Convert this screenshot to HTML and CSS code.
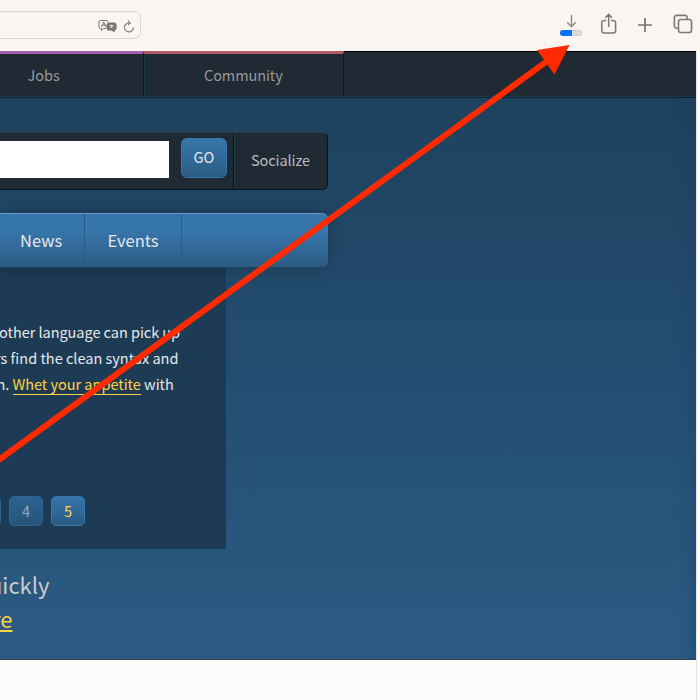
FILE: index.html
```html
<!DOCTYPE html>
<html lang="en">
<head>
<meta charset="utf-8">
<title>Python.org download</title>
<link rel="stylesheet" href="styles.css">
</head>
<body>
<header class="toolbar">
  <div class="address">
    <svg class="translate" width="20" height="15" viewBox="0 0 20 15" fill="none" stroke="#77726f" stroke-width="1">
      <path d="M8 9.500H5.500L3.500 11.500V9.500H2.500a1.500 1.500 0 0 1-1.500-1.500V3a1.500 1.500 0 0 1 1.500-1.500h6A1.500 1.500 0 0 1 10 3M3.500 8 5.700 3 8 8M4.300 6.300h3"/>
      <path d="M10.500 4h6A1.500 1.500 0 0 1 18 5.500v4a1.500 1.500 0 0 1-1.500 1.500H16v2l-2-2h-3.500A1.500 1.500 0 0 1 9 9.500v-4A1.500 1.500 0 0 1 10.500 4z" fill="#77726f"/>
      <path d="M11.500 6.500h4M13.500 5.500v1M12.200 9.300l2.600-2.600M12.200 6.700l2.600 2.600" stroke="#f3eeea" stroke-width=".9"/>
    </svg>
    <svg class="reload" width="12" height="13" viewBox="0 0 12 13" fill="none" stroke="#8a8582" stroke-width="1.200">
      <path d="M7.200 2.900H5.900A4.500 4.500 0 1 0 10.400 7.300M5 .6l2.300 2.300L5 5.200"/>
    </svg>
  </div>
  <div class="tools">
    <div class="download">
      <svg width="14" height="14" viewBox="0 0 14 14" fill="none" stroke="#86817e" stroke-width="1.300"><path d="M7.500 0v11.500M3.200 7.300l4.300 4.300 4.300-4.300"/></svg>
      <div class="progress"><i></i></div>
    </div>
    <svg width="18" height="22" viewBox="0 0 18 22" fill="none" stroke="#7d7875" stroke-width="1.500"><path d="M6.300 7.500H4A2.200 2.200 0 0 0 1.800 9.700v8A2.200 2.200 0 0 0 4 19.900h9.400a2.200 2.200 0 0 0 2.200-2.200v-8a2.200 2.200 0 0 0-2.200-2.200h-2.300M8.700 14V1.500M5.400 4.700l3.300-3.300L12 4.700"/></svg>
    <svg width="14" height="14" viewBox="0 0 14 14" fill="none" stroke="#77726f" stroke-width="1.700"><path d="M7 0v14M0 7h14"/></svg>
    <svg width="20" height="20" viewBox="0 0 20 20" fill="none" stroke="#7d7875" stroke-width="1.600"><path d="M5.500 14.200H3.600A2.200 2.200 0 0 1 1.400 12V3.600a2.200 2.200 0 0 1 2.200-2.200H12a2.200 2.200 0 0 1 2.200 2.200v1.700"/><rect x="5.500" y="5.500" width="13" height="13" rx="2.200"/></svg>
  </div>
</header>
<div class="viewport">
  <main class="page">
    <nav class="topnav">
      <a class="jobs"><span>Jobs</span></a>
      <a class="community"><span>Community</span></a>
    </nav>
    <section class="banner">
      <div class="searchbar">
        <div class="field"></div>
        <div class="go"><span>GO</span></div>
        <div class="social"><span>Socialize</span></div>
      </div>
      <nav class="mainnav">
        <a class="news"><span>News</span></a>
        <a class="events"><span>Events</span></a>
      </nav>
      <div class="slide">
        <div class="copy">
          <p><span class="l1">other language can pick up</span></p>
          <p><span class="l2">rs find the clean syntax and</span></p>
          <p><span class="l3">n. <a>Whet your appetite</a> with</span></p>
        </div>
        <div class="pager"><b></b><b>4</b><b class="active">5</b></div>
      </div>
      <div class="intro">
        <p><span class="i1">uickly</span></p>
        <p><a class="i2">re</a></p>
      </div>
    </section>
  </main>
</div>
<svg class="arrow" width="700" height="700" viewBox="0 0 700 700">
  <path d="M-5 462.600 550 59" stroke="#ff2a00" stroke-width="6" fill="none"/>
  <path d="M569.500 45 554.500 74.500 537 50z" fill="#ff2a00"/>
</svg>
</body>
</html>
```
FILE: styles.css
```css
* { box-sizing: border-box; }
body {
  margin: 0;
  width: 700px;
  height: 700px;
  overflow: hidden;
  position: relative;
  background: #fcfcfc;
  font-family: "Noto Sans CJK SC", "Noto Sans", sans-serif;
  font-size: 14.500px;
  white-space: nowrap;
}
p { margin: 0; }
.toolbar {
  height: 51px;
  background: #faf5f1;
  display: flex;
  justify-content: space-between;
  align-items: flex-start;
}
.address {
  margin-top: 11px;
  width: 141px;
  height: 28px;
  border: 1px solid #dcd7d3;
  border-left: 0;
  border-radius: 0 7px 7px 0;
  display: flex;
  justify-content: flex-end;
  padding: 7px 5px 0 0;
  gap: 5px;
}
.reload { margin-top: 1px; }
.tools { display: flex; padding: 13px 7px 0 0; }
.download { width: 22px; margin: 2px 18px 0 0; }
.download svg { display: block; margin: 0 0 1px 4px; }
.tools > svg:nth-child(2) { margin-right: 20px; }
.tools > svg:nth-child(3) { margin: 5px 21px 0 0; }
.tools > svg:nth-child(4) { margin: 1px 0 0; }
.progress { height: 6px; border-radius: 3px; background: #dadada; box-shadow: inset 0 0 0 .5px #c8c8c8; overflow: hidden; }
.progress i { display: block; width: 12px; height: 6px; background: #0a70f5; }
.viewport { height: 649px; padding-right: 4px; }
.page { height: 649px; border-right: 1px solid #e5e5e5; margin-right: -1px; }
.topnav {
  height: 47px;
  background: #1f2a34;
  border-top: 1px solid #000;
  border-bottom: 1px solid #13202b;
  box-shadow: inset 0 -1px #1c3c4c;
  display: flex;
  color: #999;
}
.topnav a { height: 45px; margin-top: -1px; border-right: 1px solid #10181f; padding-top: 9px; line-height: 24px; }
.jobs { width: 144px; border-top: 3px solid #a161ad; padding-left: 27.500px; }
.community { width: 200px; border-top: 3px solid #b55863; box-shadow: inset 1px 0 #1d3948; padding-left: 60px; letter-spacing: -.1px; }
.banner {
  height: 562px;
  background: linear-gradient(#1e415e, #2b5b84);
  border-bottom: 1px solid #38434e;
  box-shadow: inset -16px 0 20px -20px #1e415e;
  padding-top: 34px;
}
.searchbar {
  width: 328px;
  height: 58px;
  background: #1f2a34;
  border: 1px solid #06131e;
  border-top-color: #2d3e48;
  border-left: 0;
  border-radius: 0 6px 6px 0;
  display: flex;
}
.field { width: 169px; height: 37px; margin: 8px 12px 0 0; background: #fff; }
.go {
  width: 46px;
  height: 40px;
  margin: 5px 6px 0 0;
  border: 1px solid #3776ab;
  border-radius: 6px;
  background: linear-gradient(#3776ab, #2b5b84);
  color: #e6e8ea;
  line-height: 36px;
  padding-left: 11.500px;
}
.social { flex: 1; border-left: 1px solid #06131e; box-shadow: inset 1px 0 #263e4b; color: #bbb; line-height: 54px; padding-left: 17px; letter-spacing: -.1px; }
.mainnav {
  width: 328px;
  height: 55px;
  margin-top: 23px;
  position: relative;
  background: linear-gradient(#3776ab 30%, #2b5b84);
  border-top: 1px solid #659bc6;
  border-bottom: 1px solid #1e415e;
  border-radius: 0 6px 6px 0;
  box-shadow: 0 0 16px rgba(0,0,0,.25);
  color: #e6e8ea;
  font-size: 16.500px;
  line-height: 52px;
  display: flex;
}
.mainnav a { height: 53px; border-right: 1px solid #2b5b84; }
.news { width: 85px; padding-left: 20px; }
.events { width: 97px; padding-left: 22.500px; }
.slide { width: 226px; height: 281px; background: #1d3b55; padding-top: 51px; overflow: hidden; }
.copy { color: #e6e8ea; line-height: 26px; height: 177px; }
.copy a { color: #ffd343; border-bottom: 1px solid #ffd343; display: inline-block; line-height: 20px; }
.l1 { margin-left: -1px; letter-spacing: -.04px; }
.l2 { margin-left: -5px; }
.l3 { margin-left: -3.500px; letter-spacing: -.03px; }
.pager { display: flex; gap: 8px; margin-left: -33px; }
.pager b {
  width: 34px; height: 30px; border: 1px solid #306592; border-radius: 5px;
  background: linear-gradient(#2d6290, #285579); color: #96a9ba; font-weight: 400; text-align: center; line-height: 28px;
}
.pager .active { border-color: #3776ab; background: linear-gradient(#3776ab, #2b5b84); color: #ffd343; }
.intro { padding-top: 18px; font-size: 22px; line-height: 34px; color: #ccc; }
.i1 { margin-left: -11px; }
.i2 { margin-left: -8px; color: #ffd343; text-decoration: underline; }
.arrow { position: absolute; left: 0; top: 0; }
span, .i2 { display: inline-block; }
```
